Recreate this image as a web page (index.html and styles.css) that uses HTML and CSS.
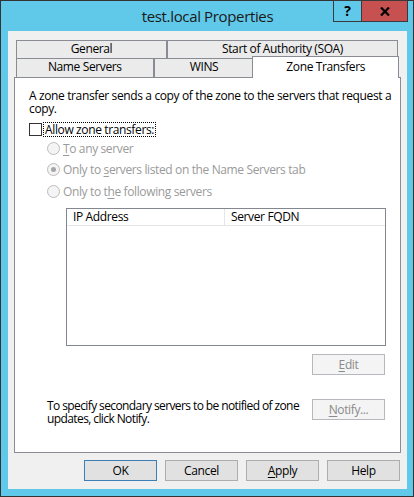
FILE: index.html
```html
<!DOCTYPE html>
<html lang="en">

<head>
    <meta charset="UTF-8">
    <meta name="viewport" content="width=device-width, initial-scale=1.0">
    <title>test.local Properties</title>
    <link rel="stylesheet" href="styles.css">
</head>

<body>
    <div class="window">
        <div class="titlebar">
            <span class="title">test.local Properties</span>
            <div class="caption-buttons">
                <span class="cap-btn cap-help">?</span>
                <span class="cap-btn cap-close">
                    <svg width="10" height="9" viewBox="0 0 10 9">
                        <path d="M1 0.5 L9 8.5 M9 0.5 L1 8.5" stroke="#000" stroke-width="2.2" fill="none"/>
                    </svg>
                </span>
            </div>
        </div>

        <div class="client">
            <!-- Tab strip, two rows -->
            <div class="tabs">
                <div class="tab-row">
                    <div class="tab tab-general">General</div>
                    <div class="tab tab-soa">Start of Authority (SOA)</div>
                </div>
                <div class="tab-row">
                    <div class="tab tab-ns">Name Servers</div>
                    <div class="tab tab-wins">WINS</div>
                    <div class="tab tab-zt active">Zone Transfers</div>
                </div>
            </div>

            <div class="panel">
                <p class="intro">A zone transfer sends a copy of the zone to the servers that request a copy.</p>

                <div class="check-row">
                    <span class="checkbox"></span>
                    <span class="focus-label">Allow zone transfers:</span>
                </div>

                <div class="options">
                    <div class="radio-row">
                        <span class="radio"></span>
                        <span><u>T</u>o any server</span>
                    </div>
                    <div class="radio-row">
                        <span class="radio checked"></span>
                        <span>Only to <u>s</u>ervers listed on the Name Servers tab</span>
                    </div>
                    <div class="radio-row">
                        <span class="radio"></span>
                        <span>Only to t<u>h</u>e following servers</span>
                    </div>
                </div>

                <div class="listview">
                    <div class="list-header">
                        <div class="col col-ip">IP Address</div>
                        <div class="col col-fqdn">Server FQDN</div>
                    </div>
                </div>

                <div class="edit-row">
                    <button class="btn" disabled><u>E</u>dit</button>
                </div>

                <div class="notify-row">
                    <p class="notify-text">To specify secondary servers to be notified of zone updates, click Notify.</p>
                    <button class="btn" disabled><u>N</u>otify...</button>
                </div>
            </div>

            <div class="footer">
                <button class="btn default">OK</button>
                <button class="btn">Cancel</button>
                <button class="btn"><u>A</u>pply</button>
                <button class="btn">Help</button>
            </div>
        </div>
    </div>
</body>

</html>
```

FILE: styles.css
```css
/* General styles */
* {
    box-sizing: border-box;
}

body {
    margin: 0;
    padding: 0;
    font-family: "Open Sans", "Noto Sans", sans-serif;
    font-size: 12px;
    letter-spacing: -0.37px;
    color: #000;
    background-color: #333;
}

u {
    text-decoration-thickness: 1px;
    text-underline-offset: 2px;
}

/* Window frame */
.window {
    position: relative;
    width: 414px;
    height: 497px;
    border: 1px solid #333;
    background-color: #60c8e8;
    padding: 0 6px 6px 7px;
}

.titlebar {
    height: 30px;
    line-height: 30px;
    text-align: center;
}

.title {
    font-size: 15px;
    letter-spacing: -0.35px;
    color: #1a1a1a;
}

.caption-buttons {
    position: absolute;
    top: -1px;
    right: 5px;
    display: flex;
    height: 22px;
    border: 1px solid #3a3a3a;
}

.cap-btn {
    display: flex;
    align-items: center;
    justify-content: center;
    font-weight: bold;
    font-size: 14px;
    line-height: 20px;
}

.cap-help {
    width: 28px;
    border-right: 1px solid #3a3a3a;
}

.cap-close {
    width: 45px;
    background-color: #c75050;
}

/* Client area */
.client {
    height: 458px;
    background-color: #f0f0f0;
    padding: 9px 6px 0 6px;
}

/* Tabs */
.tabs {
    height: 37px;
    padding: 0 2px;
}

.tab-row {
    display: flex;
    height: 18px;
}

.tab-row + .tab-row {
    height: 19px;
}

.tab {
    border: 1px solid #898c95;
    border-bottom: none;
    background-color: #ebebeb;
    text-align: center;
    line-height: 16px;
    white-space: nowrap;
}

.tab-general { width: 151px; }
.tab-soa { width: 231px; }
.tab-ns { width: 138px; }
.tab-wins { width: 101px; }

.tab.active {
    position: relative;
    z-index: 1;
    width: 147px;
    height: 22px;
    margin-top: -2px;
    margin-left: -2px;
    background-color: #fff;
    line-height: 19px;
}

/* Tab page */
.panel {
    height: 376px;
    border: 1px solid #898c95;
    background-color: #fff;
    padding: 11px 0 0 14px;
}

.intro {
    margin: 0;
    width: 372px;
    line-height: 13px;
}

.check-row {
    display: flex;
    align-items: center;
    gap: 1px;
    margin-top: 7px;
    height: 15px;
}

.checkbox {
    width: 13px;
    height: 13px;
    border: 1px solid #333;
    background-color: #fff;
}

.focus-label {
    border: 1px dotted #000;
    line-height: 13px;
    padding: 0 1px;
}

.options {
    padding-left: 18px;
    color: #9a9a9a;
}

.radio-row {
    display: flex;
    align-items: center;
    gap: 3px;
    height: 22px;
}

.radio-row + .radio-row {
    height: 21px;
}

.radio-row:last-child {
    height: 22px;
}

.radio {
    width: 13px;
    height: 13px;
    border: 1px solid #bcbcbc;
    border-radius: 50%;
    background-color: #f4f4f4;
    display: flex;
    align-items: center;
    justify-content: center;
}

.radio.checked::after {
    content: "";
    width: 5px;
    height: 5px;
    border-radius: 50%;
    background-color: #a6a6a6;
}

/* List view */
.listview {
    width: 320px;
    height: 138px;
    margin: 6px 0 0 37px;
    border: 1px solid #828790;
    background-color: #fff;
}

.list-header {
    display: flex;
    height: 17px;
    border-bottom: 1px solid #e5e5e5;
}

.col {
    padding-left: 6px;
    line-height: 16px;
}

.col-ip {
    width: 158px;
    border-right: 1px solid #e5e5e5;
}

/* Buttons */
.btn {
    width: 73px;
    height: 21px;
    padding: 0;
    font-family: inherit;
    font-size: 12px;
    letter-spacing: inherit;
    color: #000;
    background-color: #e1e1e1;
    border: 1px solid #adadad;
}

.btn.default {
    border-color: #3d7fb5;
}

.btn:disabled {
    color: #8a8a8a;
    background-color: #f4f4f4;
    border-color: #b5b8bc;
}

.edit-row {
    display: flex;
    justify-content: flex-end;
    width: 356px;
    margin-top: 8px;
}

.notify-row {
    display: flex;
    align-items: flex-start;
    justify-content: space-between;
    width: 356px;
    margin-top: 24px;
    padding-left: 18px;
}

.notify-text {
    margin: 0;
    width: 262px;
    line-height: 13px;
    letter-spacing: -0.6px;
}

/* Footer */
.footer {
    display: flex;
    justify-content: flex-end;
    gap: 8px;
    margin: 7px 1px 0 0;
}
```
